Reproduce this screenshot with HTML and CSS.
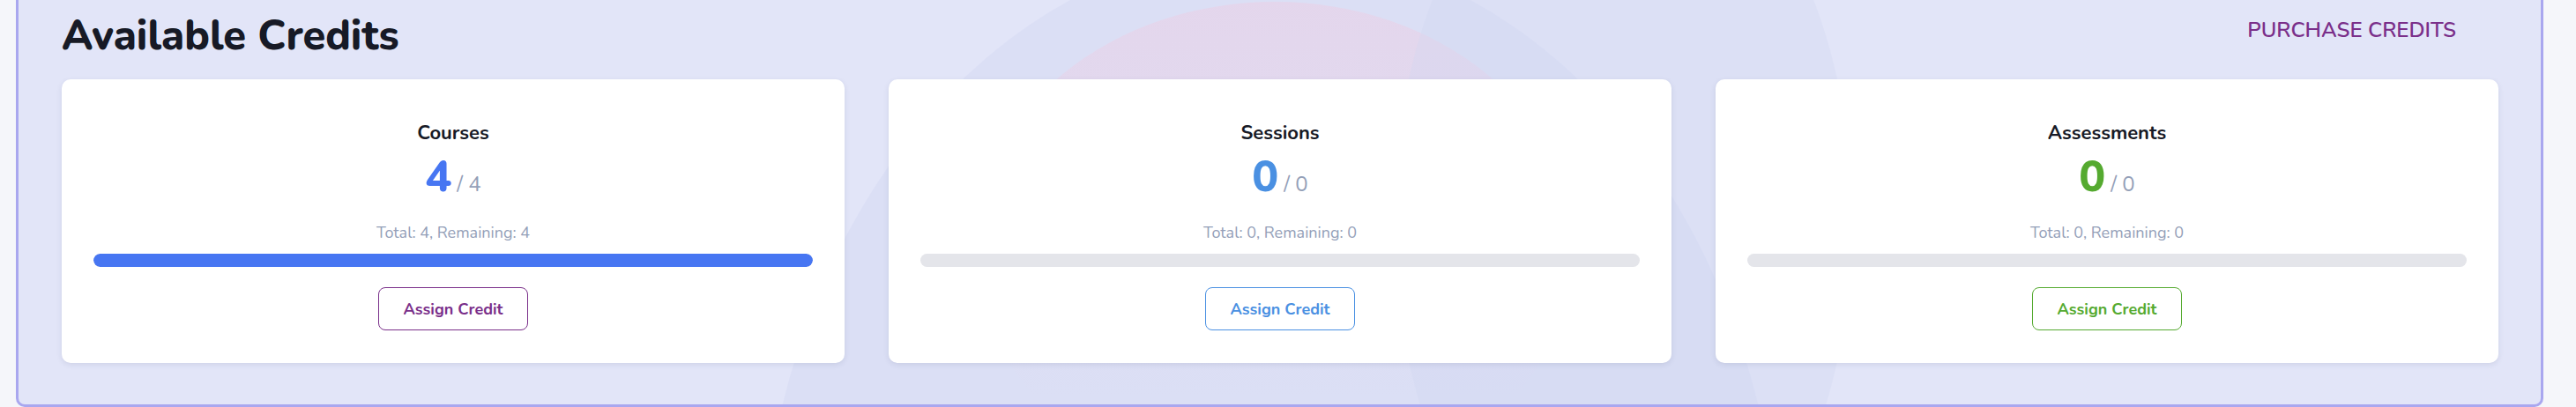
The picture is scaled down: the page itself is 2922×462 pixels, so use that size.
FILE: index.html
```html
<!DOCTYPE html>
<html lang="en">
<head>
    <meta charset="UTF-8">
    <title>Available Credits</title>
    <link rel="stylesheet" href="styles.css">
</head>
<body>

<div class="panel">
    <!-- soft background shapes -->
    <div class="blob blob-wide"></div>
    <div class="blob blob-pink"></div>
    <div class="blob blob-right"></div>

    <div class="panel-header">
        <h1 class="panel-title">Available Credits</h1>
        <button class="purchase-btn">PURCHASE CREDITS</button>
    </div>

    <div class="card-row">
        <div class="credit-card courses">
            <div class="card-title">Courses</div>
            <div class="card-count"><span class="count-main">4</span><span class="count-total">/ 4</span></div>
            <div class="card-meta">Total: 4, Remaining: 4</div>
            <div class="bar"><div class="bar-fill" style="width: 100%"></div></div>
            <button class="assign-btn">Assign Credit</button>
        </div>

        <div class="credit-card sessions">
            <div class="card-title">Sessions</div>
            <div class="card-count"><span class="count-main">0</span><span class="count-total">/ 0</span></div>
            <div class="card-meta">Total: 0, Remaining: 0</div>
            <div class="bar"><div class="bar-fill" style="width: 0%"></div></div>
            <button class="assign-btn">Assign Credit</button>
        </div>

        <div class="credit-card assessments">
            <div class="card-title">Assessments</div>
            <div class="card-count"><span class="count-main">0</span><span class="count-total">/ 0</span></div>
            <div class="card-meta">Total: 0, Remaining: 0</div>
            <div class="bar"><div class="bar-fill" style="width: 0%"></div></div>
            <button class="assign-btn">Assign Credit</button>
        </div>
    </div>
</div>

</body>
</html>
```

FILE: styles.css
```css
body, html {
    margin: 0;
    padding: 0;
    height: 100%;
    background-color: #f5f6fa;
    font-family: 'Nunito', 'Lato', sans-serif;
    color: #171a26;
}

.panel {
    position: relative;
    overflow: hidden;
    box-sizing: border-box;
    height: 462px;
    margin: 0 37px 0 18px;
    padding: 0 48px 0 49px;
    background-color: #e2e5f8;
    border: 3px solid #a9a7ef;
    border-top: none;
    border-radius: 0 0 10px 10px;
}

/* decorative shapes behind the cards */
.blob {
    position: absolute;
    border-radius: 50%;
    z-index: 0;
}

.blob-wide {
    left: 840px;
    top: -59px;
    width: 1160px;
    height: 1480px;
    background-color: rgba(205, 212, 240, 0.35);
}

.blob-pink {
    left: 1085px;
    top: 2px;
    width: 680px;
    height: 560px;
    background: linear-gradient(to bottom, rgba(230, 212, 234, 0.8) 0%, rgba(230, 214, 236, 0.45) 45%, rgba(226, 229, 248, 0) 80%);
}

.blob-right {
    left: 1560px;
    top: -200px;
    width: 520px;
    height: 900px;
    background-color: rgba(208, 214, 242, 0.35);
}

.panel-header {
    position: relative;
    z-index: 1;
    display: flex;
    justify-content: space-between;
    align-items: center;
    height: 80px;
}

.panel-title {
    margin: 0;
    font-size: 47px;
    font-weight: 800;
    line-height: 1;
}

.purchase-btn {
    margin-right: 48px;
    margin-top: -12px;
    padding: 0;
    border: none;
    background: none;
    font-family: inherit;
    font-size: 24px;
    font-weight: 600;
    color: #7a2f8a;
    cursor: pointer;
}

.card-row {
    position: relative;
    z-index: 1;
    display: grid;
    grid-template-columns: repeat(3, 1fr);
    gap: 50px;
    margin-top: 10px;
}

.credit-card {
    box-sizing: border-box;
    height: 322px;
    padding: 46px 36px 0;
    display: flex;
    flex-direction: column;
    align-items: center;
    background-color: white;
    border-radius: 10px;
    box-shadow: 0 2px 6px rgba(40, 50, 90, 0.1);
}

.card-title {
    font-size: 22px;
    font-weight: 700;
    line-height: 30px;
}

.card-count {
    display: flex;
    align-items: baseline;
    gap: 6px;
    margin-top: 7px;
    line-height: 56px;
}

.count-main {
    font-size: 50px;
    font-weight: 800;
}

.count-total {
    font-size: 24px;
    color: #94a0b8;
}

.card-meta {
    margin-top: 16px;
    font-size: 18px;
    line-height: 22px;
    color: #94a0b8;
}

.bar {
    width: 100%;
    height: 15px;
    margin-top: 13px;
    border-radius: 8px;
    background-color: #e4e5ea;
    overflow: hidden;
}

.bar-fill {
    height: 100%;
    border-radius: 8px;
}

.assign-btn {
    margin-top: 23px;
    width: 170px;
    height: 49px;
    border-radius: 8px;
    background-color: white;
    font-family: inherit;
    font-size: 18px;
    font-weight: 700;
    cursor: pointer;
}

.courses .count-main { color: #4776f2; }
.courses .bar-fill { background-color: #4776f2; }
.courses .assign-btn { color: #7a2f8a; border: 1px solid #7a2f8a; }

.sessions .count-main { color: #4a90e2; }
.sessions .bar-fill { background-color: #4a90e2; }
.sessions .assign-btn { color: #4a90e2; border: 1px solid #4a90e2; }

.assessments .count-main { color: #55aa30; }
.assessments .bar-fill { background-color: #55aa30; }
.assessments .assign-btn { color: #55aa30; border: 1px solid #55aa30; }
```
